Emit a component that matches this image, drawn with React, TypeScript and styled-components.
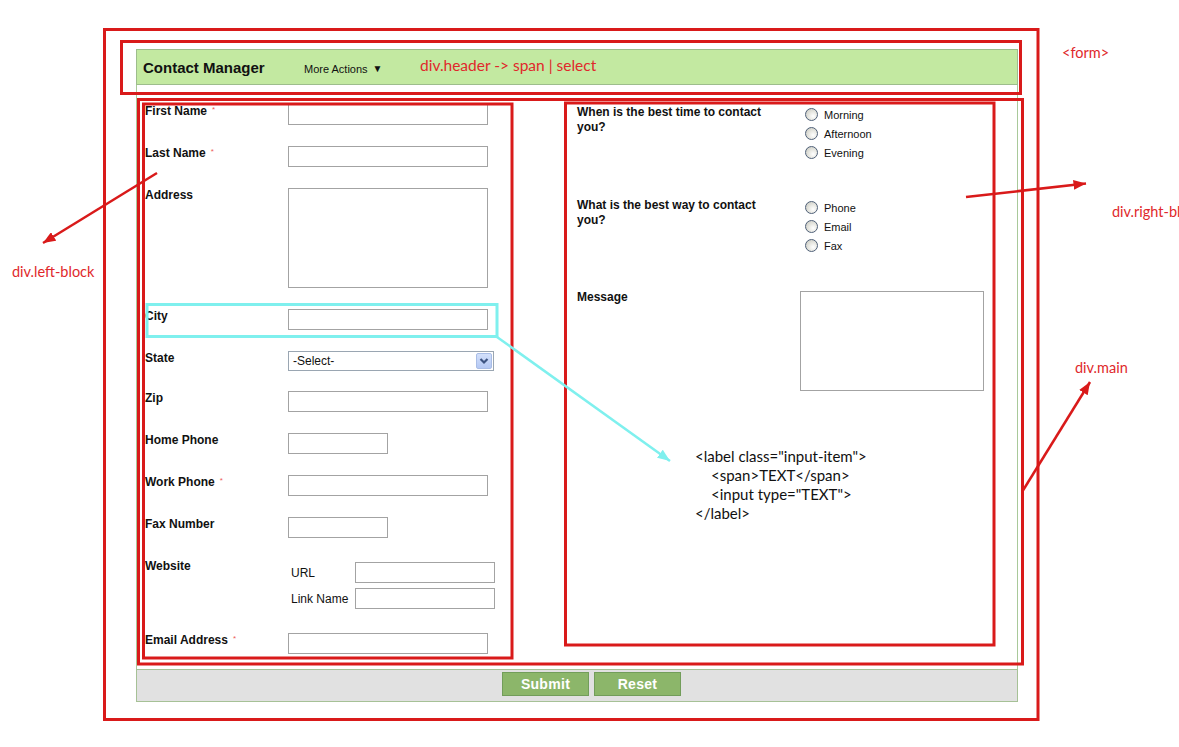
import React from "react";
import styled, { createGlobalStyle } from "styled-components";

const GlobalStyle = createGlobalStyle`
  html, body { margin: 0; padding: 0; background: #fff; }
  body { font-family: "Liberation Sans", Arial, sans-serif; color: #111; }
  * { box-sizing: border-box; }
`;

const Canvas = styled.div`
  position: relative;
  width: 1179px;
  height: 747px;
  overflow: hidden;
  background: #fff;
  padding: 49px 0 0 136px;
`;

const Form = styled.form`
  width: 882px;
  display: flex;
  flex-direction: column;
  margin: 0;
`;

const Header = styled.div`
  height: 36px;
  background: #c3e9a1;
  border: 1px solid #9dbd8c;
  display: flex;
  align-items: center;
  padding-left: 6px;
`;

const Title = styled.span`
  font: bold 15px "Liberation Sans", Arial, sans-serif;
  color: #111;
  width: 161px;
  padding-top: 1px;
`;

const MoreActions = styled.span`
  font-size: 11px;
  color: #111;
  display: flex;
  align-items: center;
  gap: 5px;
  padding-top: 3px;
`;

const Caret = styled.span`
  font-size: 10px;
`;

const Main = styled.div`
  height: 584px;
  border-left: 1px solid #a9c99a;
  border-right: 1px solid #a9c99a;
  display: flex;
  padding: 19px 0 0 8px;
`;

const LeftBlock = styled.div`
  width: 432px;
  display: flex;
  flex-direction: column;
`;

const Row = styled.div<{ $mb?: number }>`
  display: grid;
  grid-template-columns: 143px auto;
  align-items: start;
  margin-bottom: ${(p) => p.$mb ?? 21}px;
`;

const Label = styled.span`
  font: bold 12px/14px "Liberation Sans", Arial, sans-serif;
  color: #111;
`;

const Req = styled.span`
  color: #ee5a5a;
  font-size: 8px;
  font-weight: normal;
  margin-left: 5px;
  position: relative;
  top: -3px;
`;

const TextInput = styled.input<{ $w?: number }>`
  width: ${(p) => p.$w ?? 200}px;
  height: 21px;
  border: 1px solid #a3a3a3;
  margin: 0;
  padding: 0 3px;
  background: #fff;
  font: 12px "Liberation Sans", Arial, sans-serif;
`;

const TextArea = styled.textarea<{ $w: number; $h: number }>`
  width: ${(p) => p.$w}px;
  height: ${(p) => p.$h}px;
  border: 1px solid #a3a3a3;
  margin: 0;
  resize: none;
  display: block;
`;

const SelectBox = styled.div`
  width: 206px;
  height: 20px;
  border: 1px solid #9aa6b2;
  display: flex;
  align-items: center;
  justify-content: space-between;
  padding: 0 1px 0 4px;
  font: 12px "Liberation Sans", Arial, sans-serif;
  color: #111;
  background: #fff;
`;

const SelectArrow = styled.span`
  width: 16px;
  height: 16px;
  border: 1px solid #a9bde6;
  border-radius: 2px;
  background: linear-gradient(#d3e0fb, #b4c8f4);
  display: flex;
  align-items: center;
  justify-content: center;
`;

const WebsiteFields = styled.div`
  display: grid;
  grid-template-columns: 64px 140px;
  row-gap: 5px;
  padding: 3px 0 0 3px;
  align-items: center;
`;

const SubLabel = styled.span`
  font: 12px "Liberation Sans", Arial, sans-serif;
  color: #111;
`;

const RightBlock = styled.div`
  flex: 1;
  display: flex;
  flex-direction: column;
  padding-top: 1px;
`;

const Section = styled.div<{ $mt?: number }>`
  display: grid;
  grid-template-columns: 228px auto;
  margin-top: ${(p) => p.$mt ?? 0}px;
`;

const Question = styled.span`
  font: bold 12px/15px "Liberation Sans", Arial, sans-serif;
  color: #111;
  max-width: 195px;
`;

const Options = styled.div`
  display: flex;
  flex-direction: column;
`;

const Option = styled.label`
  height: 19px;
  display: flex;
  align-items: center;
  gap: 6px;
  font: 11px "Liberation Sans", Arial, sans-serif;
  color: #111;
`;

const Radio = styled.input.attrs({ type: "radio" })`
  appearance: none;
  -webkit-appearance: none;
  margin: 0;
  width: 13px;
  height: 13px;
  border-radius: 50%;
  border: 1px solid #4f6078;
  background: radial-gradient(circle at 65% 65%, #ffffff 0%, #e6e6e0 45%, #c2c3bb 100%);
`;

const MessageSection = styled.div`
  display: grid;
  grid-template-columns: 223px auto;
  margin-top: 35px;
  align-items: start;
`;

const MessageArea = styled(TextArea)`
  margin-top: 1px;
`;

const Footer = styled.div`
  height: 33px;
  background: #e1e1e1;
  border: 1px solid #a6c196;
  display: flex;
  gap: 5px;
  padding: 2px 0 0 365px;
`;

const Button = styled.button`
  width: 87px;
  height: 24px;
  background: #8cb66a;
  border: 1px solid #729d5a;
  color: #fff;
  font: bold 14px "Liberation Sans", Arial, sans-serif;
  letter-spacing: 0.3px;
  padding: 0;
  margin: 0;
`;

const Overlay = styled.svg`
  position: absolute;
  left: 0;
  top: 0;
  pointer-events: none;
`;

const Note = styled.span<{ $x: number; $y: number; $size?: number }>`
  position: absolute;
  left: ${(p) => p.$x}px;
  top: ${(p) => p.$y}px;
  font: ${(p) => p.$size ?? 14.5}px/16px Lato, "Liberation Sans", sans-serif;
  color: #e0282b;
  white-space: nowrap;
`;

const CodeNote = styled.div`
  position: absolute;
  left: 695px;
  top: 447px;
  font: 15px/19px Lato, "Liberation Sans", sans-serif;
  color: #111;
  white-space: pre;
`;

const CodeLine = styled.div<{ $indent?: boolean }>`
  padding-left: ${(p) => (p.$indent ? 16 : 0)}px;
`;

const RED = "#d91a1a";
const CYAN = "#7ff0ee";

const boxes = [
  { x: 104.5, y: 29.5, w: 933.5, h: 690 },
  { x: 121.5, y: 41.5, w: 899, h: 52 },
  { x: 138.5, y: 99.5, w: 884, h: 564.5 },
  { x: 143.5, y: 104, w: 368.5, h: 554 },
  { x: 565.5, y: 103, w: 428.5, h: 542 },
];

const arrows = [
  { x1: 157, y1: 173, x2: 43, y2: 243, c: RED, m: "ar" },
  { x1: 966, y1: 197, x2: 1086, y2: 183.5, c: RED, m: "ar" },
  { x1: 1022, y1: 492, x2: 1090, y2: 382, c: RED, m: "ar" },
  { x1: 497, y1: 337, x2: 670, y2: 461, c: CYAN, m: "ac" },
];

const Chevron = () => (
  <svg width="10" height="8" viewBox="0 0 10 8">
    <path d="M1.5 2 L5 5.5 L8.5 2" fill="none" stroke="#3d5482" strokeWidth="2.2" />
  </svg>
);

type Field = { label: string; req?: boolean; kind: "text" | "short" | "area" | "select" };

const fields: Field[] = [
  { label: "First Name", req: true, kind: "text" },
  { label: "Last Name", req: true, kind: "text" },
  { label: "Address", kind: "area" },
  { label: "City", kind: "text" },
  { label: "State", kind: "select" },
  { label: "Zip", kind: "text" },
  { label: "Home Phone", kind: "short" },
  { label: "Work Phone", req: true, kind: "text" },
  { label: "Fax Number", kind: "short" },
];

function renderControl(kind: Field["kind"]) {
  if (kind === "area") return <TextArea $w={200} $h={100} />;
  if (kind === "short") return <TextInput $w={100} />;
  if (kind === "select")
    return (
      <SelectBox>
        <span>-Select-</span>
        <SelectArrow>
          <Chevron />
        </SelectArrow>
      </SelectBox>
    );
  return <TextInput />;
}

export default function App() {
  return (
    <Canvas>
      <GlobalStyle />
      <Form onSubmit={(e) => e.preventDefault()}>
        <Header>
          <Title>Contact Manager</Title>
          <MoreActions>
            More Actions <Caret>▼</Caret>
          </MoreActions>
        </Header>
        <Main>
          <LeftBlock>
            {fields.map((f) => (
              <Row key={f.label} $mb={f.kind === "select" ? 20 : 21}>
                <Label>
                  {f.label}
                  {f.req && <Req>*</Req>}
                </Label>
                {renderControl(f.kind)}
              </Row>
            ))}
            <Row $mb={24}>
              <Label>Website</Label>
              <WebsiteFields>
                <SubLabel>URL</SubLabel>
                <TextInput $w={140} />
                <SubLabel>Link Name</SubLabel>
                <TextInput $w={140} />
              </WebsiteFields>
            </Row>
            <Row>
              <Label>
                Email Address<Req>*</Req>
              </Label>
              <TextInput />
            </Row>
          </LeftBlock>
          <RightBlock>
            <Section>
              <Question>When is the best time to contact you?</Question>
              <Options>
                {["Morning", "Afternoon", "Evening"].map((o) => (
                  <Option key={o}>
                    <Radio name="time" />
                    {o}
                  </Option>
                ))}
              </Options>
            </Section>
            <Section $mt={36}>
              <Question>What is the best way to contact you?</Question>
              <Options>
                {["Phone", "Email", "Fax"].map((o) => (
                  <Option key={o}>
                    <Radio name="way" />
                    {o}
                  </Option>
                ))}
              </Options>
            </Section>
            <MessageSection>
              <Question>Message</Question>
              <MessageArea $w={184} $h={100} />
            </MessageSection>
          </RightBlock>
        </Main>
        <Footer>
          <Button type="submit">Submit</Button>
          <Button type="reset">Reset</Button>
        </Footer>
      </Form>

      <Overlay width="1179" height="747" viewBox="0 0 1179 747">
        <defs>
          <marker id="ar" markerWidth="5" markerHeight="4" refX="5" refY="2" orient="auto" markerUnits="strokeWidth">
            <path d="M0 0 L5 2 L0 4 Z" fill={RED} />
          </marker>
          <marker id="ac" markerWidth="5" markerHeight="4" refX="5" refY="2" orient="auto" markerUnits="strokeWidth">
            <path d="M0 0 L5 2 L0 4 Z" fill={CYAN} />
          </marker>
        </defs>
        {boxes.map((b, i) => (
          <rect key={i} x={b.x} y={b.y} width={b.w} height={b.h} fill="none" stroke={RED} strokeWidth="3" />
        ))}
        <rect x="147" y="304.5" width="350" height="32" fill="none" stroke={CYAN} strokeWidth="3" />
        {arrows.map((a, i) => (
          <line
            key={i}
            x1={a.x1}
            y1={a.y1}
            x2={a.x2}
            y2={a.y2}
            stroke={a.c}
            strokeWidth="2.5"
            markerEnd={`url(#${a.m})`}
          />
        ))}
      </Overlay>

      <Note $x={420} $y={57} $size={15.5}>div.header -&gt; span | select</Note>
      <Note $x={1062} $y={45}>&lt;form&gt;</Note>
      <Note $x={1112} $y={204}>div.right-bl</Note>
      <Note $x={1075} $y={360}>div.main</Note>
      <Note $x={12} $y={264}>div.left-block</Note>

      <CodeNote>
        <CodeLine>&lt;label class="input-item"&gt;</CodeLine>
        <CodeLine $indent>&lt;span&gt;TEXT&lt;/span&gt;</CodeLine>
        <CodeLine $indent>&lt;input type="TEXT"&gt;</CodeLine>
        <CodeLine>&lt;/label&gt;</CodeLine>
      </CodeNote>
    </Canvas>
  );
}
